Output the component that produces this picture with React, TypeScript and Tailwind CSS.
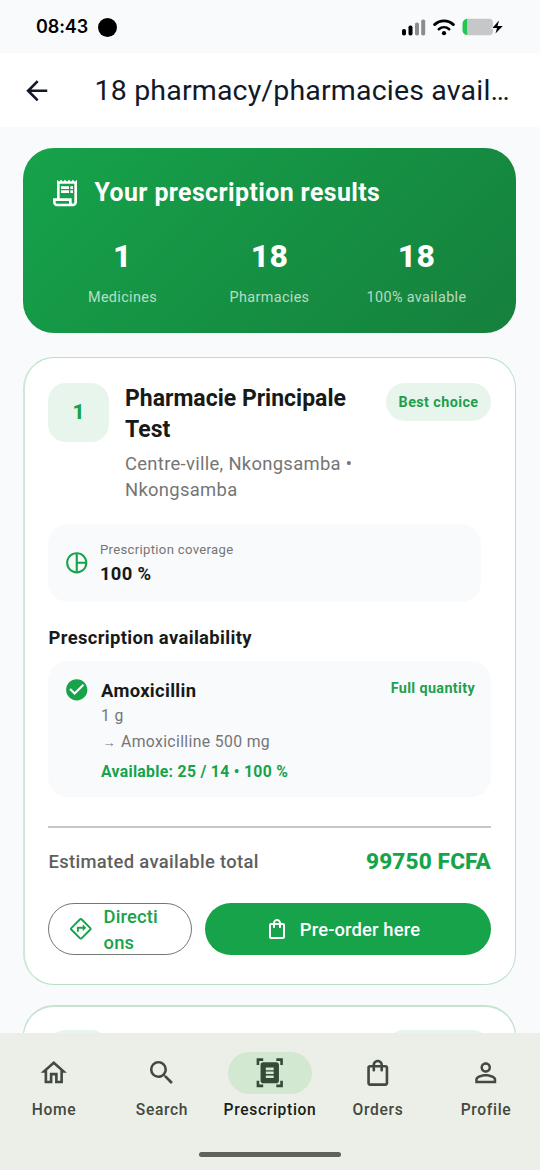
import type { IconType } from "react-icons";
import {
    MdArrowBack,
    MdCheckCircle,
    MdDocumentScanner,
    MdOutlineDirections,
    MdOutlineHome,
    MdOutlinePersonOutline,
    MdOutlinePieChartOutline,
    MdOutlineReceiptLong,
    MdOutlineShoppingBag,
    MdSearch,
} from "react-icons/md";

interface NavItem {
    label: string;
    icon: IconType;
    active?: boolean;
}

const navItems: NavItem[] = [
    { label: "Home", icon: MdOutlineHome },
    { label: "Search", icon: MdSearch },
    { label: "Prescription", icon: MdDocumentScanner, active: true },
    { label: "Orders", icon: MdOutlineShoppingBag },
    { label: "Profile", icon: MdOutlinePersonOutline },
];

const stats = [
    { value: "1", label: "Medicines" },
    { value: "18", label: "Pharmacies" },
    { value: "18", label: "100% available" },
];

function StatusBar() {
    return (
        <div className="flex h-[53px] shrink-0 items-center pt-px pr-9 pl-9">
            <span className="font-['Inter',sans-serif] text-[18px] leading-none font-semibold tracking-[-0.1px] text-black">
                08:43
            </span>
            <span className="ml-[10px] size-[19px] rounded-full bg-black" />
            <div className="ml-auto flex items-center">
                {/* signal */}
                <svg width="24" height="18" viewBox="0 0 24 18">
                    <rect x="0" y="11" width="4" height="6.5" rx="1.8" fill="#000" />
                    <rect x="6.5" y="7.5" width="4" height="10" rx="1.8" fill="#000" />
                    <rect x="13" y="4.5" width="4" height="13" rx="1.8" fill="#8b8c8d" />
                    <rect x="19.2" y="1.5" width="4" height="16" rx="1.8" fill="#8b8c8d" />
                </svg>
                {/* wifi */}
                <svg width="22" height="17" viewBox="0 0 22 17" className="ml-[7px]" fill="none" stroke="#000">
                    <path d="M1.6 5.6C7 .6 15 .6 20.4 5.6" strokeWidth="2.8" strokeLinecap="round" />
                    <path d="M5.8 10.2c3.1-2.6 7.3-2.6 10.4 0" strokeWidth="2.6" strokeLinecap="round" />
                    <circle cx="11" cy="14.2" r="2.1" fill="#000" stroke="none" />
                </svg>
                {/* battery */}
                <svg width="42" height="18" viewBox="0 0 42 18" className="ml-[7px]">
                    <path d="M6 .8h21a4 4 0 0 1 4 4v8.4a4 4 0 0 1-4 4H6z" fill="#c6c7c8" />
                    <path d="M5.5.8v16.4a5 5 0 0 1-5-5V5.8a5 5 0 0 1 5-5z" fill="#22c84d" />
                    <path
                        d="M37 2.6 30.4 10h4.6l-1.5 5.6 7.3-7.6h-5.2z"
                        fill="#000"
                        stroke="#f9fafc"
                        strokeWidth="1.6"
                        paintOrder="stroke"
                    />
                </svg>
            </div>
        </div>
    );
}

function SummaryCard() {
    return (
        <section className="h-[185px] rounded-[31px] bg-[linear-gradient(135deg,#16a34a,#15803d)] px-[26px] pt-[27px] text-white">
            <div className="flex items-center">
                <MdOutlineReceiptLong className="size-8" />
                <h2 className="ml-[13.5px] pt-px text-[24.9px] leading-[34px] font-bold tracking-[0.4px]">
                    Your prescription results
                </h2>
            </div>
            <div className="mt-[25px] grid grid-cols-3 text-center">
                {stats.map((stat) => (
                    <div key={stat.label}>
                        <div className="text-[32px] leading-[42px] font-extrabold tracking-[0.3px]">
                            {stat.value}
                        </div>
                        <div className="mt-[10px] text-[14.4px] leading-[21px] tracking-[0.36px] text-white/70">
                            {stat.label}
                        </div>
                    </div>
                ))}
            </div>
        </section>
    );
}

function PharmacyCard() {
    return (
        <section className="mt-6 h-[628px] rounded-[31px] border border-l-2 border-[#b9dfc8] border-l-[#cfe6d9] bg-white pt-[24.5px] pr-6 pl-[23px]">
            <div className="flex items-start">
                <div className="flex h-[59px] w-[61px] shrink-0 items-center justify-center rounded-[18px] bg-[#e8f5ec] pt-px text-[21px] font-extrabold text-[#16a34a]">
                    1
                </div>
                <div className="ml-4 flex-1">
                    <h3 className="pt-[0.5px] text-[23px] leading-[31.2px] font-bold text-[#171a17]">
                        Pharmacie Principale Test
                    </h3>
                    <p className="mt-[5.5px] text-[18.4px] leading-[26.2px] tracking-[0.31px] text-[#757575]">
                        Centre-ville, Nkongsamba • Nkongsamba
                    </p>
                </div>
                <span className="ml-4 shrink-0 rounded-full bg-[#e8f5ec] px-[12.5px] pt-[9px] pb-[7px] text-[14.4px] leading-[22px] font-bold tracking-[0.4px] text-[#1f9f4d]">
                    Best choice
                </span>
            </div>

            <div className="mt-[20.5px] mr-[10.5px] flex h-[78px] items-center rounded-[20px] bg-[#f9fafc] pl-[16px]">
                <MdOutlinePieChartOutline className="size-[25.5px] text-[#16a34a]" />
                <div className="ml-[10.5px]">
                    <div className="mt-[2px] text-[13.1px] leading-[20px] tracking-[0.33px] text-[#757575]">
                        Prescription coverage
                    </div>
                    <div className="mt-px text-[18.4px] leading-[26px] font-bold tracking-[0.3px] text-[#171a17]">
                        100 %
                    </div>
                </div>
            </div>

            <h4 className="mt-[23px] pl-[0.5px] text-[18.4px] leading-[26px] font-bold tracking-[0.36px] text-[#171a17]">
                Prescription availability
            </h4>
            <div className="mt-[10.5px] flex h-[136px] items-start rounded-[20px] bg-[#f9fafc] pt-[16px] pr-4 pl-[16px]">
                <MdCheckCircle className="size-[25.5px] text-[#16a34a]" />
                <div className="ml-[11.5px] flex-1">
                    <div className="text-[18.4px] leading-[27px] font-bold tracking-[0.33px] text-[#171a17]">
                        Amoxicillin
                    </div>
                    <div className="text-[15.75px] leading-[23px] tracking-[0.38px] text-[#757575]">1 g</div>
                    <div className="mt-[3px] text-[15.75px] leading-[23px] tracking-[0.36px] text-[#757575]">
                        <span className="inline-block w-[20px] pl-[1.5px] text-[13px] leading-none">→</span>
                        Amoxicilline 500 mg
                    </div>
                    <div className="mt-[7px] text-[15.75px] leading-[23px] font-bold tracking-[0.31px] text-[#16a34a]">
                        Available: 25 / 14 • 100 %
                    </div>
                </div>
                <span className="pt-px text-[14.4px] leading-[22px] font-bold tracking-[0.35px] text-[#1f9f4d]">
                    Full quantity
                </span>
            </div>

            <div className="mt-[28.5px] h-[2px] bg-[#c7c9c7]" />

            <div className="mt-[17px] flex items-center justify-between">
                <span className="pl-[0.5px] text-[18.4px] leading-[34px] font-medium tracking-[0.33px] text-[#5f5f5f]">
                    Estimated available total
                </span>
                <span className="text-[22.6px] leading-[34px] font-extrabold tracking-[0.15px] text-[#16a34a]">
                    99750 FCFA
                </span>
            </div>

            <div className="mt-[24px] flex h-[52px] gap-[13px] text-[18.4px] leading-[26px] font-medium tracking-[0.13px]">
                <button className="flex w-[144px] items-center rounded-full border border-[#737873] pl-[20px] text-left text-[#16a34a]">
                    <MdOutlineDirections className="size-[23.6px]" />
                    <span className="ml-[11px] w-[56px] pt-[2px] break-all">Directions</span>
                </button>
                <button className="flex flex-1 items-center justify-center rounded-full bg-[#16a34a] pr-[11px] text-white">
                    <MdOutlineShoppingBag className="size-6" />
                    <span className="ml-[11px] pt-[2px]">Pre-order here</span>
                </button>
            </div>
        </section>
    );
}

// Top of the second result, cut off by the navigation bar
function NextPharmacyCard() {
    return (
        <section className="mt-[20px] flex h-[628px] shrink-0 items-start justify-between rounded-[31px] border border-t-2 border-[#b9dfc8] border-t-[#c6e4d2] bg-white pt-[23px] pr-6 pl-[24px]">
            <div className="h-[59px] w-[61px] rounded-[18px] bg-[#e8f5ec]" />
            <div className="h-[38px] w-[106px] rounded-full bg-[#e8f5ec]" />
        </section>
    );
}

function BottomNav() {
    return (
        <nav className="h-[137px] shrink-0 bg-[#ecefe8] pt-[18.5px]">
            <div className="grid grid-cols-5">
                {navItems.map(({ label, icon: Icon, active }) => (
                    <div key={label} className="flex flex-col items-center">
                        <div
                            className={`flex h-[42px] w-[84px] items-center justify-center rounded-full ${
                                active ? "bg-[#d3e8d0] text-[#364b37]" : "text-[#424940]"
                            }`}
                        >
                            <Icon className="size-[31.5px]" />
                        </div>
                        <span
                            className={`mt-[6.5px] text-[15.6px] leading-[21px] font-medium tracking-[0.68px] whitespace-nowrap ${
                                active ? "text-[#171d17]" : "text-[#424940]"
                            }`}
                        >
                            {label}
                        </span>
                    </div>
                ))}
            </div>
            <div className="mx-auto mt-[31px] h-[5px] w-[142px] rounded-full bg-[#5f625b]" />
        </nav>
    );
}

export default function App() {
    return (
        <div className="flex h-[1170px] w-[540px] flex-col overflow-hidden bg-[#f9fafc] font-['Roboto',sans-serif]">
            <StatusBar />
            <header className="flex h-[74px] shrink-0 items-center bg-white pt-px pl-[21px] text-[#111827]">
                <MdArrowBack className="size-[31.5px] shrink-0" />
                <h1 className="ml-[42px] text-[28.5px] leading-9 tracking-[0.18px] whitespace-nowrap">
                    18 pharmacy/pharmacies avail…
                </h1>
            </header>
            <main className="min-h-0 flex-1 overflow-hidden pt-[21px] pr-6 pl-[23px]">
                <SummaryCard />
                <PharmacyCard />
                <NextPharmacyCard />
            </main>
            <BottomNav />
        </div>
    );
}
